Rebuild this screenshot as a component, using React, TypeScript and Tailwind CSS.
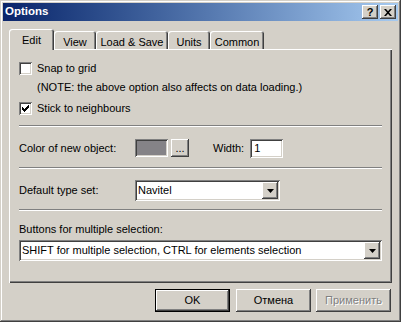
const raised =
  "shadow-[inset_-1px_-1px_#404040,inset_1px_1px_#ffffff,inset_-2px_-2px_#808080,inset_2px_2px_#d4d0c8]";
const sunken =
  "shadow-[inset_1px_1px_#808080,inset_-1px_-1px_#ffffff,inset_2px_2px_#404040,inset_-2px_-2px_#d4d0c8]";

const tabs = [
  { label: "Edit", w: "w-[45px]" },
  { label: "View", w: "w-[42px]" },
  { label: "Load & Save", w: "w-[72px]" },
  { label: "Units", w: "w-[42px]" },
  { label: "Common", w: "w-[54px]" },
];

function Checkbox({ checked }: { checked?: boolean }) {
  return (
    <div className={`w-[13px] h-[13px] bg-white flex items-center justify-center ${sunken}`}>
      {checked && (
        <svg width="7" height="7" viewBox="0 0 7 7">
          <path d="M0 2h1v1h1v1h1v-1h1v-1h1v-1h1v-1h1v3h-1v1h-1v1h-1v1h-1v1h-1v-1h-1v-1h-1v-1h-1z" fill="#000" />
        </svg>
      )}
    </div>
  );
}

function Arrow() {
  return (
    <svg width="7" height="4" viewBox="0 0 7 4">
      <path d="M0 0h7l-3.5 4z" fill="#000" />
    </svg>
  );
}

function Combo({ value, className }: { value: string; className: string }) {
  return (
    <div className={`h-[21px] bg-white flex items-center p-[2px] ${sunken} ${className}`}>
      <span className="flex-1 pl-[1px] leading-[13px]">{value}</span>
      <div className={`w-[16px] h-[17px] bg-[#d4d0c8] flex items-center justify-center ${raised}`}>
        <Arrow />
      </div>
    </div>
  );
}

function Separator() {
  return (
    <div className="h-[2px] w-full border-t border-t-[#808080] border-b border-b-white" />
  );
}

export default function App() {
  return (
    <div
      className="w-[401px] h-[322px] p-[3px] bg-[#d4d0c8] flex flex-col text-[11px] text-black shadow-[inset_-1px_-1px_#404040,inset_1px_1px_#d4d0c8,inset_-2px_-2px_#808080,inset_2px_2px_#ffffff]"
      style={{ fontFamily: '"Liberation Sans", Arial, sans-serif' }}
    >
      {/* Title bar */}
      <div className="h-[18px] flex items-center pl-[2px] pr-[2px] bg-gradient-to-r from-[#0a246a] to-[#a6caf0]">
        <span className="flex-1 text-white font-bold text-[11.5px] leading-none">Options</span>
        <div className={`w-[16px] h-[14px] bg-[#d4d0c8] flex items-center justify-center font-bold text-[11px] leading-none ${raised}`}>
          ?
        </div>
        <div className={`ml-[2px] w-[16px] h-[14px] bg-[#d4d0c8] flex items-center justify-center ${raised}`}>
          <svg width="8" height="7" viewBox="0 0 8 7">
            <path d="M0 0h2l2 2.2L6 0h2L5 3.5 8 7H6L4 4.8 2 7H0l3-3.5z" fill="#000" />
          </svg>
        </div>
      </div>

      {/* Tabs */}
      <div className="mt-[8px] ml-[6px] mr-[6px] flex flex-col">
        <div className="flex items-end h-[20px] relative z-10">
          {tabs.map((t, i) =>
            i === 0 ? (
              <div
                key={t.label}
                className={`${t.w} h-[21px] -mb-px bg-[#d4d0c8] rounded-t-[3px] flex items-start justify-center pt-[3px] shadow-[inset_1px_1px_#ffffff,inset_-1px_0_#404040,inset_-2px_0_#808080]`}
              >
                {t.label}
              </div>
            ) : (
              <div
                key={t.label}
                className={`${t.w} h-[18px] bg-[#d4d0c8] rounded-t-[3px] flex items-start justify-center pt-[3px] shadow-[inset_1px_1px_#ffffff,inset_-1px_0_#404040,inset_-2px_0_#808080]`}
              >
                {t.label}
              </div>
            )
          )}
        </div>

        {/* Panel */}
        <div className="h-[234px] px-[10px] pt-[13px] flex flex-col shadow-[inset_1px_1px_#ffffff,inset_-1px_-1px_#404040,inset_-2px_-2px_#808080]">
          <div className="h-[13px] flex items-center gap-[5px]">
            <Checkbox />
            <span>Snap to grid</span>
          </div>
          <div className="mt-[6px] h-[13px] pl-[18px] flex items-center">
            (NOTE: the above option also affects on data loading.)
          </div>
          <div className="mt-[8px] h-[13px] flex items-center gap-[5px]">
            <Checkbox checked />
            <span>Stick to neighbours</span>
          </div>
          <div className="mt-[10px]">
            <Separator />
          </div>

          <div className="mt-[12px] h-[18px] flex items-center">
            <span className="w-[116px]">Color of new object:</span>
            <div className={`w-[33px] h-[18px] bg-[#858387] ${sunken}`} />
            <div className={`ml-[3px] w-[18px] h-[18px] flex items-end justify-center pb-[3px] leading-none ${raised}`}>
              ...
            </div>
            <span className="ml-[24px]">Width:</span>
            <div className={`ml-[6px] w-[33px] h-[19px] bg-white flex items-center pl-[4px] ${sunken}`}>1</div>
          </div>
          <div className="mt-[10px]">
            <Separator />
          </div>

          <div className="mt-[11px] h-[21px] flex items-center">
            <span className="w-[116px]">Default type set:</span>
            <Combo value="Navitel" className="w-[145px]" />
          </div>
          <div className="mt-[8px]">
            <Separator />
          </div>

          <div className="mt-[12px] h-[13px] flex items-center">Buttons for multiple selection:</div>
          <Combo
            value="SHIFT for multiple selection, CTRL for elements selection"
            className="mt-[4px] w-full"
          />
        </div>
      </div>

      {/* Buttons */}
      <div className="mt-[6px] mr-[7px] flex justify-end">
        <div className="w-[75px] h-[23px] border border-black">
          <div className={`w-full h-full flex items-center justify-center ${raised}`}>OK</div>
        </div>
        <div className={`ml-[6px] w-[75px] h-[23px] flex items-center justify-center ${raised}`}>Отмена</div>
        <div
          className={`ml-[5px] w-[75px] h-[23px] flex items-center justify-center text-[#808080] [text-shadow:1px_1px_#ffffff] ${raised}`}
        >
          Применить
        </div>
      </div>
    </div>
  );
}
